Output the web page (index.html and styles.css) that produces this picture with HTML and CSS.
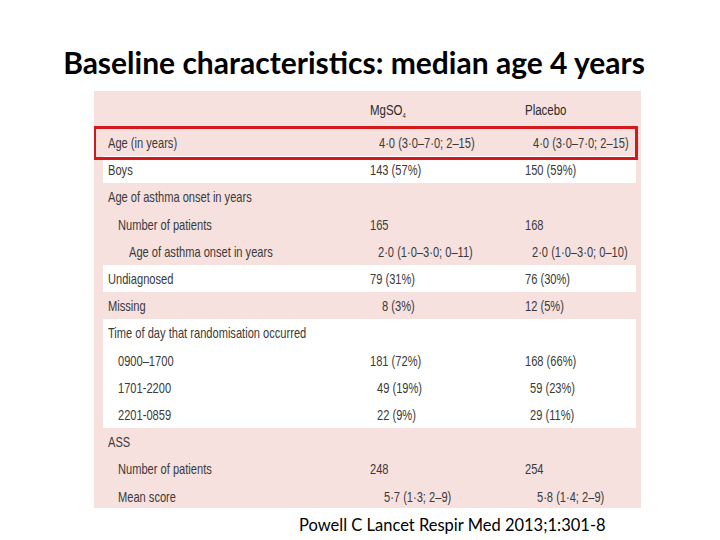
FILE: index.html
```html
<!DOCTYPE html>
<html>
<head>
<meta charset="utf-8">
<link rel="stylesheet" href="styles.css">
</head>
<body>
<div class="slide">
  <h1 class="title">Baseline characteristics: median age 4 years</h1>
  <div class="table">
    <div class="row head"><span class="lab"></span><span class="v">MgSO<sub>4</sub></span><span class="v">Placebo</span></div>
    <div class="row"><span class="lab">Age (in years)</span><span class="v o9">4·0 (3·0–7·0; 2–15)</span><span class="v o8">4·0 (3·0–7·0; 2–15)</span></div>
    <div class="row white"><span class="lab">Boys</span><span class="v">143 (57%)</span><span class="v">150 (59%)</span></div>
    <div class="row"><span class="lab">Age of asthma onset in years</span><span class="v"></span><span class="v"></span></div>
    <div class="row"><span class="lab i1">Number of patients</span><span class="v">165</span><span class="v">168</span></div>
    <div class="row"><span class="lab i2">Age of asthma onset in years</span><span class="v o8">2·0 (1·0–3·0; 0–11)</span><span class="v o7">2·0 (1·0–3·0; 0–10)</span></div>
    <div class="row white"><span class="lab">Undiagnosed</span><span class="v">79 (31%)</span><span class="v">76 (30%)</span></div>
    <div class="row"><span class="lab">Missing</span><span class="v o12">8 (3%)</span><span class="v">12 (5%)</span></div>
    <div class="row white"><span class="lab">Time of day that randomisation occurred</span><span class="v"></span><span class="v"></span></div>
    <div class="row white"><span class="lab i1">0900–1700</span><span class="v">181 (72%)</span><span class="v">168 (66%)</span></div>
    <div class="row white"><span class="lab i1">1701-2200</span><span class="v o7">49 (19%)</span><span class="v o5">59 (23%)</span></div>
    <div class="row white"><span class="lab i1">2201-0859</span><span class="v o7">22 (9%)</span><span class="v o5">29 (11%)</span></div>
    <div class="row"><span class="lab">ASS</span><span class="v"></span><span class="v"></span></div>
    <div class="row"><span class="lab i1">Number of patients</span><span class="v">248</span><span class="v">254</span></div>
    <div class="row"><span class="lab i1">Mean score</span><span class="v o14">5·7 (1·3; 2–9)</span><span class="v o12">5·8 (1·4; 2–9)</span></div>
    <div class="highlight"></div>
  </div>
  <p class="cite">Powell C Lancet Respir Med 2013;1:301-8</p>
</div>
</body>
</html>
```

FILE: styles.css
```css
html, body {
  margin: 0;
  padding: 0;
  background: #ffffff;
}

.slide {
  width: 720px;
  height: 540px;
  display: flex;
  flex-direction: column;
  overflow: hidden;
}

.title {
  margin: 0;
  padding-top: 44px;
  height: 36px;
  line-height: 36px;
  font-family: Lato, "Open Sans", sans-serif;
  font-weight: 700;
  font-size: 30px;
  color: #000000;
  text-align: center;
  padding-right: 12px;
}

.table {
  position: relative;
  margin-top: 11px;
  margin-left: 94px;
  width: 547px;
  height: 417px;
  box-sizing: border-box;
  padding: 0 5px 0 9px;
  background: #f6e1df;
  overflow: hidden;
  font-family: "Liberation Sans", Arial, sans-serif;
  font-size: 15px;
  color: #3a3a3a;
}

.row {
  display: grid;
  grid-template-columns: 267px 155px 1fr;
  height: 27.2px;
  align-items: center;
  white-space: nowrap;
}

.lab, .v {
  transform: scaleX(0.74);
  transform-origin: left center;
}

.row.head {
  height: 38px;
  color: #2a2a2a;
  font-size: 15.5px;
}

.row.head sub {
  font-size: 8px;
  vertical-align: -3px;
}

.row.white {
  background: #ffffff;
}

.lab {
  margin-left: 5px;
}

.lab.i1 { margin-left: 15px; }
.lab.i2 { margin-left: 26px; }

.v.o5 { margin-left: 5px; }
.v.o7 { margin-left: 7px; }
.v.o8 { margin-left: 8px; }
.v.o9 { margin-left: 9px; }
.v.o12 { margin-left: 12px; }
.v.o14 { margin-left: 14px; }

.highlight {
  position: absolute;
  left: -1px;
  top: 35px;
  width: 545px;
  height: 34px;
  box-sizing: border-box;
  border: 3px solid #d3191c;
}

.cite {
  margin: 6px 0 0 0;
  padding-left: 299px;
  height: 22px;
  line-height: 22px;
  font-family: Lato, "Open Sans", sans-serif;
  font-size: 16.5px;
  color: #000000;
}
```
